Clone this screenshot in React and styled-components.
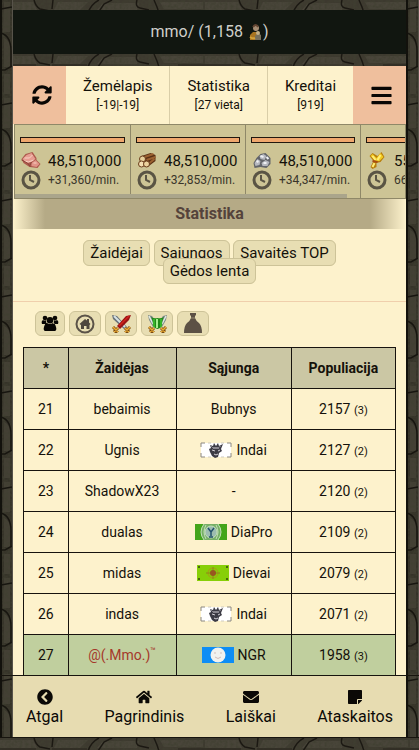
import React from "react";
import styled, { createGlobalStyle, css } from "styled-components";
import {
  FaSyncAlt,
  FaBars,
  FaChevronCircleLeft,
  FaHome,
  FaEnvelope,
  FaStickyNote,
} from "react-icons/fa";

const svgUrl = (markup) => `url("data:image/svg+xml,${encodeURIComponent(markup)}")`;

const grain = `<filter id="g" x="0" y="0" width="100%" height="100%"><feTurbulence type="fractalNoise" baseFrequency=".35" numOctaves="2" seed="4"/><feColorMatrix values="0 0 0 0 .05  0 0 0 0 .05  0 0 0 0 .03  0 0 0 1.6 -.5"/></filter>`;

const stoneRow = svgUrl(`<svg xmlns="http://www.w3.org/2000/svg" width="205" height="13" viewBox="0 0 205 13">${grain}
<rect width="205" height="13" fill="#3d392f"/>
<g fill="#49453a"><path d="M0 2h33l4 8H0zM58 2h30l-8 8H54zM103 3h36l-2 7h-40zM160 2h43v7h-39z"/></g>
<rect width="205" height="13" filter="url(#g)"/>
<g fill="none" stroke="#1b1812" stroke-width="1.5"><path d="M34 0q2 7 6 9l10 2M53 0l-1 9M99 0q-8 4-11 13M112 0l-8 4-6 9M137 0q-2 7 3 8l9 2M154 0l3 7 2 6"/></g>
<path d="M178 11h27M0 11h36M52 11h35" stroke="#26221b"/>
<rect y="12" width="205" height="1" fill="#1e1b15"/></svg>`);

const stoneColumn = svgUrl(`<svg xmlns="http://www.w3.org/2000/svg" width="13" height="96" viewBox="0 0 13 96">${grain}
<rect width="13" height="96" fill="#353228"/>
<g fill="#444035"><path d="M4 2h6v30H3zM4 38q6 2 6 12v17H4zM4 74h6v20H4z"/></g>
<rect width="13" height="96" filter="url(#g)"/>
<g fill="none" stroke="#17150f" stroke-width="1.5"><path d="M1 33q10 3 10 18v15M0 70h5l7-4M1 9l11-2"/></g>
<rect width="2" height="96" fill="#12110c"/><rect x="12" width="1" height="96" fill="#57534a"/></svg>`);

const GlobalStyle = createGlobalStyle`
  *, *::before, *::after { box-sizing: border-box; }
  body {
    margin: 0;
    background: #2b2820;
    color: #14110a;
    font: 15px/20px Roboto, "Liberation Sans", sans-serif;
  }
  a { color: inherit; text-decoration: none; }
`;

const Shell = styled.div`
  display: flex;
  flex-direction: column;
  height: 100vh;
  overflow: hidden;
  background: ${stoneColumn} left top repeat-y, ${stoneColumn} right top repeat-y, #2b2820;
`;

const StoneStrip = styled.div`
  flex: none;
  height: ${(p) => p.$height}px;
  margin: 0 13px;
  background: ${stoneRow} -13px 0 repeat-x;
`;

const BottomStrip = styled(StoneStrip)`
  margin: 0;
  background-position: 0 0;
`;

const TitleBox = styled.header`
  flex: none;
  display: flex;
  align-items: center;
  justify-content: center;
  gap: 6px;
  height: 44px;
  margin: 0 13px;
  background: #111610;
  color: #cfcfca;
  font-size: 16px;
`;

const TitleIcon = styled.span`
  display: inline-flex;
  align-items: center;
  gap: 1px;
`;

const Panel = styled.main`
  flex: 1;
  min-height: 0;
  overflow: hidden;
  margin: 0 13px;
  background: #fdf2cc;
`;

const Tabs = styled.nav`
  display: flex;
  height: 58px;
`;

const SideButton = styled.button`
  flex: none;
  display: flex;
  align-items: center;
  justify-content: center;
  width: 53px;
  padding: 0 0 0 4px;
  border: 0;
  background: #efbf9d;
  color: #080604;
  font-size: ${(p) => p.$size}px;
`;

const Tab = styled.a`
  flex: 1 1 auto;
  display: flex;
  flex-direction: column;
  align-items: center;
  justify-content: center;
  font-size: 15px;
  line-height: 19px;

  & + & {
    border-left: 1px solid #d9cea8;
  }

  small {
    font-size: 12px;
    line-height: 18px;
  }
`;

const Resources = styled.section`
  position: relative;
  display: flex;
  height: 75px;
  margin-left: 1px;
  overflow: hidden;
  border: 1px solid #8f8868;
  background: #cdc495;
`;

const Resource = styled.div`
  flex: none;
  width: 115px;
  padding: 12px 5px 0;

  & + & {
    border-left: 1px solid #8f8868;
  }
`;

const Capacity = styled.div`
  height: 6px;
  border: 1px solid #21170e;
  background: #efa76d;
`;

const ResourceLine = styled.div`
  display: flex;
  align-items: center;
  gap: 7px;
  height: 19px;
  padding-left: 1px;
  color: ${(p) => (p.$rate ? "#39352a" : "#14110a")};
  font-size: ${(p) => (p.$rate ? 12 : 15)}px;
  white-space: nowrap;

  ${Capacity} + & {
    margin-top: 8px;
  }

  svg {
    flex: none;
  }
`;

const ScrollThumb = styled.div`
  position: absolute;
  left: 0;
  bottom: 0;
  width: 85%;
  height: 4px;
  background: #aaa58b;
`;

const Heading = styled.h1`
  margin: 0;
  background: linear-gradient(90deg, #fdf2cc, #b5aa86 32px, #b5aa86 calc(100% - 36px), #fdf2cc);
  color: #54433b;
  font-size: 16px;
  font-weight: 700;
  line-height: 30px;
  text-align: center;
`;

const chip = css`
  border: 1px solid #cdc398;
  border-radius: 6px;
  background: #e8deb3;
`;

const Filters = styled.nav`
  padding: 15px 64px 0;
  border-bottom: 1px solid #f0cfac;
  height: 73px;
  line-height: 18px;
  text-align: center;
`;

const FilterLink = styled.a`
  ${chip}
  position: relative;
  padding: 3px 6px;
  white-space: nowrap;
`;

const Modes = styled.div`
  display: flex;
  gap: 4px;
  padding: 9px 22px 11px;
`;

const ModeButton = styled.button`
  ${chip}
  display: flex;
  align-items: center;
  justify-content: center;
  width: 32px;
  height: 25px;
  padding: 0;

  &:first-child {
    width: 30px;
  }
`;

const TableWrap = styled.div`
  padding: 0 10px;
`;

const Table = styled.table`
  width: 100%;
  table-layout: fixed;
  border-collapse: collapse;
  font-size: 14px;
  text-align: center;

  th,
  td {
    height: 41px;
    padding: 0;
    border: 1px solid #17130e;
  }

  th {
    background: #cbc7a4;
  }

  small {
    font-size: 11px;
    line-height: 1;
  }
`;

const Column = styled.col`
  width: ${(p) => p.$share}%;
`;

const PlayerRow = styled.tr`
  background: ${(p) => (p.$own ? "#c0cf9e" : "transparent")};
`;

const Player = styled.a`
  color: ${(p) => (p.$own ? "#a5382a" : "inherit")};

  sup {
    font-size: 9px;
    line-height: 0;
  }
`;

const Alliance = styled.a`
  display: inline-flex;
  align-items: center;
  gap: 4px;
  vertical-align: top;
`;

const Footer = styled.footer`
  flex: none;
  padding: 0 13px;
  border-top: 1px solid #17140e;
  border-bottom: 1px solid #17140e;
`;

const FooterNav = styled.nav`
  display: flex;
  justify-content: space-between;
  height: 61px;
  padding: 13px 13px 0;
  background: #e7dcb1;
`;

const FooterLink = styled.a`
  display: flex;
  flex-direction: column;
  align-items: center;
  gap: 2px;
  color: #0b0906;
  font-size: 16px;
`;

const PawnIcon = () => (
  <svg width="13" height="17" viewBox="0 0 13 17" aria-hidden="true">
    <path d="M1 16V11l3-3h4l3 3v5z" fill="#a87420" />
    <circle cx="7" cy="4" r="3" fill="#a68d73" />
    <path d="M4 3q3-4 5 0" stroke="#624431" strokeWidth="2" fill="none" />
    <path d="M6 16v-4l3-3 3 2v5z" fill="#77705d" />
    <circle cx="9" cy="9" r="2" fill="#c5b189" />
    <path d="M1 13q3 2 5 1" stroke="#d4a33b" strokeWidth="2" fill="none" />
  </svg>
);

const resourceArt = {
  clay: (
    <>
      <path d="M0 7l4-5 7-2 4 6 0 2 4 4-3 4-8-1-6-4z" fill="#ad594d" />
      <path d="M1 7l4-4 5-2 4 6-4 3-5 1z" fill="#e79d92" />
      <path d="M10 11l4-3 4 4-3 3-5-1z" fill="#e19489" />
      <path d="M3 6l5 0 3-3M3 9l4 1 5-2M12 11l3 0" stroke="#f8d2c2" fill="none" />
      <path d="M0 8l6 3 3 4M10 10l-2 4" stroke="#8f473c" fill="none" />
    </>
  ),
  wood: (
    <>
      <path d="M4 4l9-3 5 2v6l-8 6-7-2z" fill="#593014" />
      <path d="M7 5l9-3M9 8l9-3M12 11l5-4" stroke="#9c6130" strokeWidth="2" />
      <circle cx="5" cy="7" r="3" fill="#e7cf9a" stroke="#6b3d1b" />
      <circle cx="4" cy="12" r="3" fill="#f4dfb2" stroke="#6b3d1b" />
      <circle cx="9" cy="12" r="3" fill="#ecd39e" stroke="#6b3d1b" />
    </>
  ),
  iron: (
    <>
      <path d="M1 11l3-5 4-4 5-1 5 5v6l-4 4-6-1-6 1z" fill="#62646a" />
      <path d="M7 4l4-2 3 2-2 4-4-1zM2 11l3-4 3 2-1 4-4 1zM9 11l4-3 4 2-2 4-5 0z" fill="#b6b8bf" />
      <path d="M8 4l3 1M4 9l2 1M11 11l3 0M14 5l2 2" stroke="#eef0f4" strokeWidth="2" />
    </>
  ),
  crop: (
    <>
      <path d="M2 4l3-3 5 3 4-4 3 5-4 5-4 1 0 4-4 2-2-2 3-6z" fill="#b77d0c" />
      <path d="M3 4l2-2 4 4 4-5 3 4-4 4-4 0z" fill="#f2cb24" />
      <path d="M5 4l3 4M13 3l-3 5M7 11l-2 4" stroke="#ffed76" strokeWidth="2" />
      <path d="M5 9l5 1" stroke="#a74b12" strokeWidth="2" />
    </>
  ),
};

const ResourceIcon = ({ kind }) => (
  <svg width="20" height="17" viewBox="0 0 19 17" aria-hidden="true">
    {resourceArt[kind]}
  </svg>
);

const ClockIcon = () => (
  <svg width="20" height="20" viewBox="0 0 20 20" fill="none" stroke="#5a5444" aria-hidden="true">
    <circle cx="10" cy="10" r="8" strokeWidth="3" />
    <path d="M9 5v5l4 2" strokeWidth="2" />
  </svg>
);

const UsersIcon = () => (
  <svg width="18" height="17" viewBox="0 0 18 17" fill="#080604" aria-hidden="true">
    <circle cx="4" cy="3" r="2.3" />
    <circle cx="14" cy="3" r="2.3" />
    <circle cx="9" cy="5.3" r="3.3" />
    <path d="M1 9q-1-3 1-4 2 1 3 0 0 3 1 4zM17 9q1-3-1-4-2 1-3 0 0 3-1 4zM4 16q-2-1-1-4 1-4 3-4 3 2 6 0 2 0 3 4 1 3-1 4z" />
  </svg>
);

const VillageIcon = () => (
  <svg width="20" height="20" viewBox="0 0 20 20" aria-hidden="true">
    <circle cx="10" cy="10" r="8.5" fill="none" stroke="#5b5348" strokeWidth="2" />
    <path d="M4.500 10L10 5l2 1.500V5h2v3.500l1.500 1.500-1 1v4h-3v-3H9v3H6v-4z" fill="#4f483e" />
  </svg>
);

const SwordHilts = () => (
  <>
    <path d="M1 13l5 5M18 13l-5 5M2 18l4-4M17 18l-4-4" stroke="#7b4a10" strokeWidth="3" />
    <path d="M1 13l5 5M18 13l-5 5M2 18l4-4M17 18l-4-4" stroke="#edae35" strokeWidth="1.5" />
  </>
);

const AttackIcon = () => (
  <svg width="19" height="20" viewBox="0 0 19 20" fill="none" aria-hidden="true">
    <path d="M0 1l5 1 10 11-3 2L1 5z" fill="#69727a" />
    <path d="M2 2l11 11" stroke="#d6e3e5" strokeWidth="2" />
    <path d="M19 1l-5 1L5 12l3 3L17 6z" fill="#981515" />
    <path d="M17 2L7 12" stroke="#d3231d" strokeWidth="1.500" />
    <SwordHilts />
  </svg>
);

const DefenceIcon = () => (
  <svg width="19" height="20" viewBox="0 0 19 20" fill="none" aria-hidden="true">
    <path d="M0 1l4 1 3 4-2 7-4-7zM19 1l-4 1-3 4 2 7 4-7z" fill="#7e8a86" />
    <path d="M1 2l4 8M18 2l-4 8" stroke="#e0e9e4" strokeWidth="1.500" />
    <SwordHilts />
    <path d="M3 3q3 2 6.500 1Q13 5 16 3q-2 3-2 9-2 3-4.500 3T5 12q0-6-2-9z" fill="#208a18" />
    <path d="M6 5v8M13 5v8" stroke="#3fc22f" strokeWidth="1.500" />
    <path d="M9 5v9" stroke="#a4f08e" strokeWidth="2" />
  </svg>
);

const PotionIcon = () => (
  <svg width="20" height="21" viewBox="0 0 20 21" fill="#5c5145" aria-hidden="true">
    <path d="M7 0h6v2l-1 1v2q1 3 4 5 3 3 3 10H1q0-7 3-10 3-2 4-5V3L7 2z" />
    <path d="M8 5h4" stroke="#958a72" />
  </svg>
);

const JesterFlag = () => (
  <svg width="32" height="16" viewBox="0 0 32 16" aria-hidden="true">
    <path d="M1 1h30v14H1z" fill="#fff" />
    <path d="M1 5V1h4M27 1h4v4M31 11v4h-4M5 15H1v-4" stroke="#8c8880" fill="none" />
    <path d="M8 1h3M21 1h3M8 15h3M21 15h3" stroke="#cfcbc0" />
    <path d="M10 3l3 1 1-3 2 3 2-3 1 3 4-2-2 5 1 2-3 2-1 4-3 1-3-2-2-4-1-3 2-1z" fill="#3c3b44" />
    <path d="M12 8l3 1M18 9l2-1M14 12l2 1 2-1M13 6h6" stroke="#d5d2d8" fill="none" />
    <path d="M10 3l3 3M19 5l2-1" stroke="#85828a" />
  </svg>
);

const GlobeFlag = () => (
  <svg width="32" height="16" viewBox="0 0 32 16" aria-hidden="true">
    <path d="M0 0h32v16H0z" fill="#43a51a" />
    <path d="M9 0h14q6 8 0 16H9Q3 8 9 0z" fill="#76af66" />
    <g fill="none" stroke="#c3dfbb">
      <path d="M9 0Q3 8 9 16M23 0q6 8 0 16M11 1q-4 7 0 14M21 1q4 7 0 14" />
      <circle cx="16" cy="8" r="6" fill="#9cbcb0" />
    </g>
    <path d="M13 4l3 4 3-4M16 8v4M14 13h4" stroke="#22516b" strokeWidth="1.500" fill="none" />
  </svg>
);

const TargetFlag = () => (
  <svg width="32" height="16" viewBox="0 0 32 16" aria-hidden="true">
    <path d="M0 0h32v16H0z" fill="#87cf08" />
    <path d="M1 1h2v2H1zM29 1h2v2h-2zM1 13h2v2H1zM29 13h2v2h-2z" fill="#47680c" />
    <circle cx="16" cy="8" r="5" fill="none" stroke="#ad9a18" />
    <path d="M9 8h14M16 2v12" stroke="#8f861b" />
    <circle cx="16" cy="8" r="3" fill="#985620" />
  </svg>
);

const FaceFlag = () => (
  <svg width="32" height="16" viewBox="0 0 32 16" aria-hidden="true">
    <path d="M0 0h32v16H0z" fill="#0d8df5" />
    <circle cx="16" cy="8" r="7.5" fill="#f2f2ef" />
    <path d="M12 6h2M18 6h2M13 10q3 3 6 0" stroke="#d2bdb9" fill="none" />
  </svg>
);

const resources = [
  { kind: "clay", amount: "48,510,000", rate: "+31,360/min." },
  { kind: "wood", amount: "48,510,000", rate: "+32,853/min." },
  { kind: "iron", amount: "48,510,000", rate: "+34,347/min." },
  { kind: "crop", amount: "55,000,000", rate: "66,000/min." },
];

const filters = ["Žaidėjai", "Sąjungos", "Savaitės TOP", "Gėdos lenta"];

const modes = [
  { label: "Žaidėjai", Icon: UsersIcon },
  { label: "Gyvenvietės", Icon: VillageIcon },
  { label: "Puolimas", Icon: AttackIcon },
  { label: "Gynyba", Icon: DefenceIcon },
  { label: "Eliksyrai", Icon: PotionIcon },
];

const players = [
  { rank: 21, name: "bebaimis", alliance: "Bubnys", population: 2157, villages: 3 },
  { rank: 22, name: "Ugnis", alliance: "Indai", Flag: JesterFlag, population: 2127, villages: 2 },
  { rank: 23, name: "ShadowX23", population: 2120, villages: 2 },
  { rank: 24, name: "dualas", alliance: "DiaPro", Flag: GlobeFlag, population: 2109, villages: 2 },
  { rank: 25, name: "midas", alliance: "Dievai", Flag: TargetFlag, population: 2079, villages: 2 },
  { rank: 26, name: "indas", alliance: "Indai", Flag: JesterFlag, population: 2071, villages: 2 },
  { rank: 27, name: "@(.Mmo.)", mark: "™", own: true, alliance: "NGR", Flag: FaceFlag, population: 1958, villages: 3 },
];

const footerLinks = [
  { label: "Atgal", Icon: FaChevronCircleLeft },
  { label: "Pagrindinis", Icon: FaHome },
  { label: "Laiškai", Icon: FaEnvelope },
  { label: "Ataskaitos", Icon: FaStickyNote },
];

export default function App() {
  return (
    <>
      <GlobalStyle />
      <Shell>
        <StoneStrip $height={10} />
        <TitleBox>
          <span>mmo/ (1,158</span>
          <TitleIcon>
            <PawnIcon />)
          </TitleIcon>
        </TitleBox>
        <StoneStrip $height={12} />
        <Panel>
          <Tabs>
            <SideButton $size={20} aria-label="Atnaujinti">
              <FaSyncAlt />
            </SideButton>
            <Tab href="#map">
              Žemėlapis<small>[-19|-19]</small>
            </Tab>
            <Tab href="#stats">
              Statistika<small>[27 vieta]</small>
            </Tab>
            <Tab href="#credits">
              Kreditai<small>[919]</small>
            </Tab>
            <SideButton $size={23} aria-label="Meniu">
              <FaBars />
            </SideButton>
          </Tabs>
          <Resources>
            {resources.map((r) => (
              <Resource key={r.kind}>
                <Capacity />
                <ResourceLine>
                  <ResourceIcon kind={r.kind} />
                  {r.amount}
                </ResourceLine>
                <ResourceLine $rate>
                  <ClockIcon />
                  {r.rate}
                </ResourceLine>
              </Resource>
            ))}
            <ScrollThumb />
          </Resources>
          <Heading>Statistika</Heading>
          <Filters>
            {filters.map((label) => (
              <React.Fragment key={label}>
                <FilterLink href="#filter">{label}</FilterLink>{" "}
              </React.Fragment>
            ))}
          </Filters>
          <Modes>
            {modes.map(({ label, Icon }) => (
              <ModeButton key={label} aria-label={label}>
                <Icon />
              </ModeButton>
            ))}
          </Modes>
          <TableWrap>
            <Table>
              <colgroup>
                <Column $share={12} />
                <Column $share={29} />
                <Column $share={31} />
                <Column $share={28} />
              </colgroup>
              <thead>
                <tr>
                  <th>*</th>
                  <th>Žaidėjas</th>
                  <th>Sąjunga</th>
                  <th>Populiacija</th>
                </tr>
              </thead>
              <tbody>
                {players.map(({ rank, name, mark, own, alliance, Flag, population, villages }) => (
                  <PlayerRow key={rank} $own={own}>
                    <td>{rank}</td>
                    <td>
                      <Player href="#player" $own={own}>
                        {name}
                        {mark && <sup>{mark}</sup>}
                      </Player>
                    </td>
                    <td>
                      {alliance ? (
                        <Alliance href="#alliance">
                          {Flag && <Flag />}
                          {alliance}
                        </Alliance>
                      ) : (
                        "-"
                      )}
                    </td>
                    <td>
                      {population} <small>({villages})</small>
                    </td>
                  </PlayerRow>
                ))}
              </tbody>
            </Table>
          </TableWrap>
        </Panel>
        <Footer>
          <FooterNav>
            {footerLinks.map(({ label, Icon }) => (
              <FooterLink key={label} href="#nav">
                <Icon size={16} />
                {label}
              </FooterLink>
            ))}
          </FooterNav>
        </Footer>
        <BottomStrip $height={12} />
      </Shell>
    </>
  );
}
